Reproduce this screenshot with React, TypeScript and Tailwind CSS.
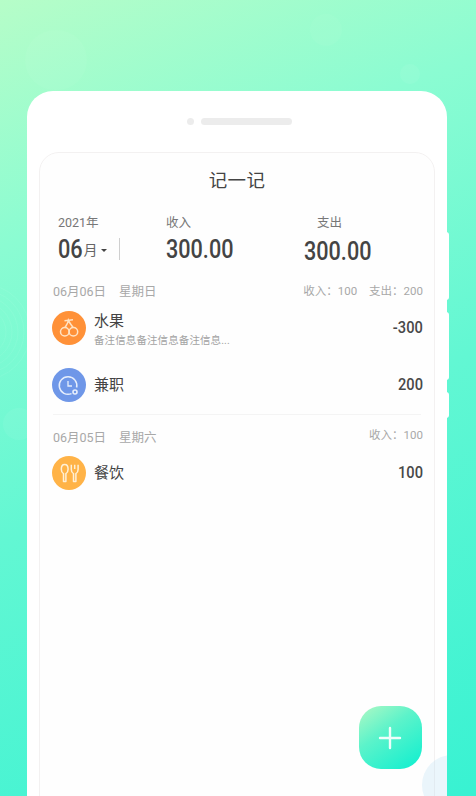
const CJK = "font-['Roboto','Noto_Sans_CJK_SC',sans-serif]";

function CherryIcon() {
  return (
    <svg width="34" height="34" viewBox="0 0 34 34" fill="none" stroke="#ffe3c4" strokeWidth="1.5">
      <circle cx="12.8" cy="20.8" r="4.3" />
      <circle cx="21.4" cy="20.8" r="4.3" />
      <path d="M13 16.5 C14.5 14 16 12 16.4 9.4 C17.5 12 19.5 14 21 16.5" />
      <path d="M12.5 9.8 L21 8.8" />
    </svg>
  );
}

function ClockIcon() {
  return (
    <svg width="34" height="34" viewBox="0 0 34 34" fill="none" stroke="#e6eefc" strokeWidth="1.5">
      <path d="M24.6 19.5 A8.8 8.8 0 1 0 19.5 25.6" />
      <path d="M16 13 V18 H20" strokeWidth="1.3" />
      <circle cx="23" cy="24" r="2" fill="#6f97e8" strokeWidth="1.6" />
    </svg>
  );
}

function CutleryIcon() {
  return (
    <svg width="34" height="34" viewBox="0 0 34 34" fill="none" stroke="#fff0d6" strokeWidth="1.5" strokeLinejoin="round">
      <g transform="translate(0.7 0)">
        <path d="M12 8.5 C9.6 8.5 8.6 11 8.6 13.2 C8.6 15.6 9.8 17 10.8 17.6 V25.4 H13.2 V17.6 C14.2 17 15.4 15.6 15.4 13.2 C15.4 11 14.4 8.5 12 8.5 Z" />
        <path d="M18.6 8.8 V13.6 C18.6 15.8 19.6 17 20.8 17.6 V25.4 H23.2 V17.6 C24.4 17 25.4 15.8 25.4 13.6 V8.8 M22 8.8 V13" />
      </g>
    </svg>
  );
}

function Row({ icon, color, name, note, amount }: { icon: React.ReactNode; color: string; name: string; note?: string; amount: string }) {
  return (
    <div className="flex h-[57px] items-center pl-[12px] pr-[11px]">
      <div className={`flex h-[34px] w-[34px] shrink-0 items-center justify-center rounded-full ${color}`}>{icon}</div>
      <div className={`ml-[8px] flex-1 ${note ? "pt-[4px]" : ""}`}>
        <div className="text-[15px] leading-[20px] text-[#444]">{name}</div>
        {note && <div className="mt-[2px] text-[10.5px] leading-[16px] tracking-[0.1px] text-[#a3a3a3]">{note}</div>}
      </div>
      <div className="origin-right scale-x-[0.86] text-[17px] font-medium text-[#484848]">{amount}</div>
    </div>
  );
}

function DateHead({ date, week, right }: { date: string; week: string; right: React.ReactNode }) {
  return (
    <div className="flex h-[20px] items-center justify-between pl-[13px] pr-[11px] text-[#a8a8a8]">
      <div className="flex gap-[13px] text-[12.5px]">
        <span>{date}</span>
        <span>{week}</span>
      </div>
      {right}
    </div>
  );
}

export default function App() {
  return (
    <div className={`relative h-[796px] w-[476px] overflow-hidden bg-[linear-gradient(158deg,#b6fdc8_0%,#8bfcd2_25%,#62f7d3_55%,#38f2d2_100%)] ${CJK}`}>
      {/* faint background bubbles */}
      <div className="absolute left-[25px] top-[30px] h-[60px] w-[62px] rounded-full bg-white/[0.04]" />
      <div className="absolute left-[310px] top-[14px] h-[32px] w-[32px] rounded-full bg-white/[0.04]" />
      <div className="absolute left-[400px] top-[64px] h-[20px] w-[20px] rounded-full bg-white/[0.05]" />
      <div className="absolute left-[3px] top-[408px] h-[32px] w-[32px] rounded-full bg-white/[0.05]" />
      <svg className="absolute left-0 top-[280px]" width="30" height="110" viewBox="0 0 30 110" fill="none" stroke="#fff" strokeOpacity="0.06">
        <circle cx="-18" cy="52" r="24" />
        <circle cx="-18" cy="52" r="30" />
        <circle cx="-18" cy="52" r="36" />
        <circle cx="-18" cy="52" r="42" />
        <circle cx="-18" cy="52" r="48" />
      </svg>

      {/* side tabs of the phone */}
      <div className="absolute left-[446px] top-[232px] h-[68px] w-[3px] rounded-r-sm bg-white" />
      <div className="absolute left-[446px] top-[312px] h-[68px] w-[3px] rounded-r-sm bg-white" />
      <div className="absolute left-[446px] top-[392px] h-[26px] w-[3px] rounded-r-sm bg-white" />

      <div className="pl-[27px] pr-[29px] pt-[91px]">
        <div className="relative h-[740px] overflow-hidden rounded-[26px] bg-white px-[12px] pt-[27px]">
          <div className="flex items-center justify-center gap-[7px] pl-[4px]">
            <div className="h-[7px] w-[7px] rounded-full bg-[#ececec]" />
            <div className="h-[7px] w-[91px] rounded-full bg-[#ececec]" />
          </div>

          <div className="mt-[27px] h-[700px] rounded-[20px] border border-[#f3f1f1] bg-[#fefefe]">
            <div className="pt-[15px] text-center text-[18.5px] leading-[26px] tracking-[0.3px] text-[#444]">记一记</div>

            <div className="mt-[20px] flex pl-[18px]">
              <div className="w-[107px]">
                <div className="text-[12.5px] leading-[18px] text-[#777]">2021年</div>
                <div className="mt-[3px] flex h-[28px] items-center">
                  <span className="-mr-[4px] origin-left scale-x-[0.87] text-[25px] font-medium leading-none text-[#444]">06</span>
                  <span className="ml-[1px] mt-[2px] text-[14px] text-[#666]">月</span>
                  <span className="ml-[4px] mt-[3px] h-0 w-0 border-x-[3px] border-t-[3px] border-x-transparent border-t-[#444]" />
                  <span className="ml-[12px] h-[22px] w-px bg-[#cfcfcf]" />
                </div>
              </div>
              <div className="w-[139px] pl-[1px]">
                <div className="text-[12.5px] leading-[18px] text-[#777]">收入</div>
                <div className="mt-[4px] h-[28px] origin-left scale-x-[0.865] text-[25px] font-medium leading-[28px] text-[#444]">300.00</div>
              </div>
              <div>
                <div className="pl-[13px] text-[12.5px] leading-[18px] text-[#777]">支出</div>
                <div className="mt-[6px] h-[28px] origin-left scale-x-[0.865] text-[25px] font-medium leading-[28px] text-[#444]">300.00</div>
              </div>
            </div>

            <div className="mt-[16px]">
              <DateHead
                date="06月06日"
                week="星期日"
                right={
                  <div className="flex gap-[12px] text-[11.5px]">
                    <span>收入：100</span>
                    <span>支出：200</span>
                  </div>
                }
              />
              <div className="mt-[-3px]">
                <Row icon={<CherryIcon />} color="bg-[#ff9138]" name="水果" note="备注信息备注信息备注信息..." amount="-300" />
                <Row icon={<ClockIcon />} color="bg-[#6f97e8]" name="兼职" amount="200" />
              </div>
              <div className="mx-[13px] mt-[1px] h-px bg-[#f4f4f4]" />
              <div className="mt-[13px]">
                <DateHead date="06月05日" week="星期六" right={<span className="-translate-y-[2px] text-[11.5px]">收入：100</span>} />
              </div>
              <div className="mt-[-4px]">
                <Row icon={<CutleryIcon />} color="bg-[#ffb347]" name="餐饮" amount="100" />
              </div>
            </div>
          </div>

          {/* pale bubble, clipped by the card */}
          <div className="absolute left-[395px] top-[664px] h-[60px] w-[60px] rounded-full bg-[#b0dcf5]/25" />
        </div>
      </div>

      {/* add button */}
      <div className="absolute left-[359px] top-[706px] flex h-[63px] w-[63px] items-center justify-center rounded-[22px] bg-[linear-gradient(145deg,#b0f8c4_0%,#5cf3ca_40%,#0cefd0_100%)]">
        <svg className="-translate-x-[1px]" width="24" height="24" viewBox="0 0 24 24" fill="none" stroke="#fff" strokeOpacity="0.9" strokeWidth="2.4" strokeLinecap="round">
          <path d="M12 2 V22 M2 12 H22" />
        </svg>
      </div>
    </div>
  );
}
